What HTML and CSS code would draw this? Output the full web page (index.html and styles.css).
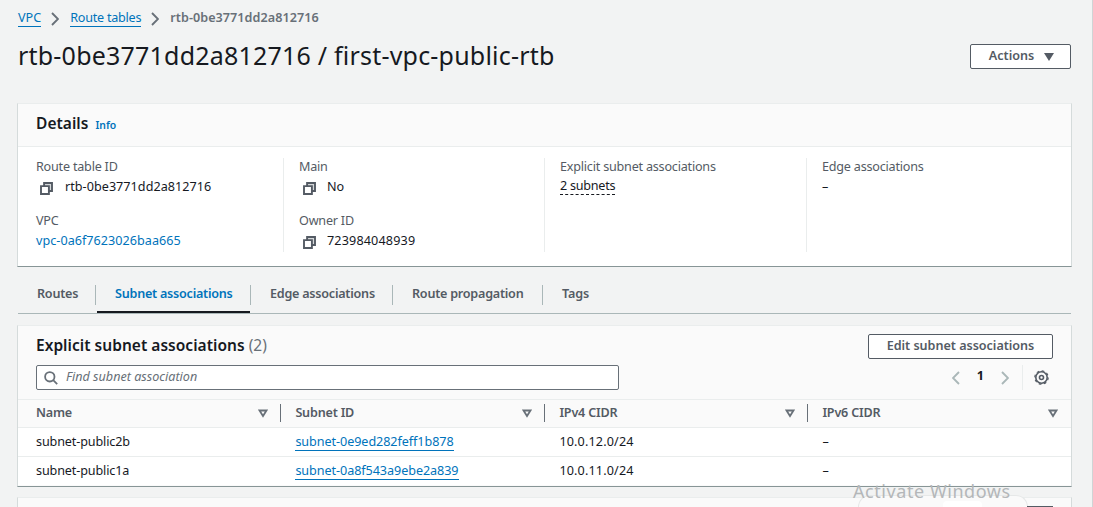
FILE: index.html
```html
<!DOCTYPE html>
<html lang="en">
<head>
<meta charset="utf-8">
<title>VPC route table</title>
<link rel="stylesheet" href="styles.css">
</head>
<body>
<svg class="defs" width="0" height="0">
  <symbol id="copy" viewBox="0 0 13 13"><path d="M4.1 1h7.9v8h-7.9z" fill="#d5d8da" stroke="currentColor" stroke-width="1.9"/><path d="M1 4.1h7.9v7.9H1z" fill="#fff" stroke="currentColor" stroke-width="1.9"/></symbol>
  <symbol id="chev" viewBox="0 0 8 14"><path d="M1 1l6 6-6 6" fill="none" stroke="currentColor" stroke-width="1.9"/></symbol>
  <symbol id="sort" viewBox="0 0 10 9"><path d="M1.5 1.5h7L5 7z" fill="none" stroke="currentColor" stroke-width="1.8"/></symbol>
</svg>
<main class="page">
  <nav class="crumbs">
    <a class="crumb">VPC</a><svg class="chev"><use href="#chev"/></svg>
    <a class="crumb tight">Route tables</a><svg class="chev"><use href="#chev"/></svg>
    <span class="current">rtb-0be3771dd2a812716</span>
  </nav>
  <header class="head">
    <h1>rtb-0be3771dd2a812716 / first-vpc-public-rtb</h1>
    <button class="btn actions"><span>Actions</span><svg width="10" height="8" viewBox="0 0 10 8"><path d="M0 0h10L5 8z" fill="currentColor"/></svg></button>
  </header>

  <section class="card details">
    <div class="details-head"><h2>Details</h2><a class="info">Info</a></div>
    <div class="grid">
      <div class="col">
        <div class="pair"><div class="label">Route table ID</div><div class="value"><svg class="copy"><use href="#copy"/></svg><span class="id">rtb-0be3771dd2a812716</span></div></div>
        <div class="pair"><div class="label">VPC</div><div class="value"><a class="id">vpc-0a6f7623026baa665</a></div></div>
      </div>
      <div class="col">
        <div class="pair"><div class="label">Main</div><div class="value"><svg class="copy"><use href="#copy"/></svg><span>No</span></div></div>
        <div class="pair"><div class="label">Owner ID</div><div class="value"><svg class="copy"><use href="#copy"/></svg><span class="digits">723984048939</span></div></div>
      </div>
      <div class="col">
        <div class="pair"><div class="label">Explicit subnet associations</div><div class="value"><span class="dashed">2 subnets</span></div></div>
      </div>
      <div class="col">
        <div class="pair"><div class="label">Edge associations</div><div class="value">–</div></div>
      </div>
    </div>
  </section>

  <div class="tabs">
    <div class="tab t1"><span>Routes</span></div>
    <div class="tab t2 active"><span>Subnet associations</span></div>
    <div class="tab t3"><span>Edge associations</span></div>
    <div class="tab t4"><span>Route propagation</span></div>
    <div class="tab t5"><span>Tags</span></div>
  </div>

  <section class="card assoc">
    <div class="assoc-head">
      <h2>Explicit subnet associations <span class="count">(2)</span></h2>
      <button class="btn edit"><span>Edit subnet associations</span></button>
    </div>
    <div class="tools">
      <div class="search"><svg width="14" height="14" viewBox="0 0 14 14"><circle cx="5.8" cy="5.8" r="4.7" fill="none" stroke="currentColor" stroke-width="1.8"/><path d="M9.2 9.2l4 4" stroke="currentColor" stroke-width="1.8"/></svg><span>Find subnet association</span></div>
      <div class="pager">
        <svg class="chev prev"><use href="#chev"/></svg><b>1</b><svg class="chev"><use href="#chev"/></svg>
        <i class="rule"></i>
        <svg class="gear" width="15" height="15" viewBox="0 0 15 15" fill="none" stroke="currentColor"><circle cx="7.5" cy="7.5" r="5.7" stroke-width="1.6"/><circle cx="7.5" cy="7.5" r="6.7" stroke-width="1.2" stroke-dasharray="2.7 2.562"/><circle cx="7.5" cy="7.5" r="2" stroke-width="1.6"/></svg>
      </div>
    </div>
    <div class="row th">
      <div class="cell"><span>Name</span><svg class="sort"><use href="#sort"/></svg></div>
      <div class="cell"><span>Subnet ID</span><svg class="sort"><use href="#sort"/></svg></div>
      <div class="cell"><span>IPv4 CIDR</span><svg class="sort"><use href="#sort"/></svg></div>
      <div class="cell"><span>IPv6 CIDR</span><svg class="sort"><use href="#sort"/></svg></div>
    </div>
    <div class="row"><div class="cell"><span class="name">subnet-public2b</span></div><div class="cell"><a>subnet-0e9ed282feff1b878</a></div><div class="cell"><span class="digits">10.0.12.0/24</span></div><div class="cell">–</div></div>
    <div class="row"><div class="cell"><span class="name">subnet-public1a</span></div><div class="cell"><a>subnet-0a8f543a9ebe2a839</a></div><div class="cell"><span class="digits">10.0.11.0/24</span></div><div class="cell">–</div></div>
  </section>
  <section class="card next"></section>
</main>
<div class="hint"><div class="hint-tab"></div></div>
<div class="dark-edge"></div>
<div class="watermark">Activate Windows</div>
</body>
</html>
```
FILE: styles.css
```css
* { box-sizing: border-box; }
body { margin: 0; width: 1093px; height: 507px; overflow: hidden; position: relative; background: #f2f3f3; font: 12.6px/18px "Noto Sans", sans-serif; color: #16191f; white-space: nowrap; }
.defs { position: absolute; }
svg { flex: none; display: block; }
a { color: #0073bb; }
h1, h2 { margin: 0; }
.page { height: 507px; padding: 0 20px 0 17px; border-right: 1px solid #d0d4d5; }
.crumbs { display: flex; align-items: center; height: 36px; padding-left: 1px; color: #687078; }
.crumb { border-bottom: 1px solid #0073bb; line-height: 16px; }
.tight { letter-spacing: -0.23px; }
.crumbs .chev { margin: 2px 11px 0 10px; }
.chev { width: 8px; height: 14px; }
.current { font-weight: 600; letter-spacing: 0.05px; }
.head { display: flex; justify-content: space-between; align-items: flex-start; height: 67px; padding: 0 1px; }
h1 { font-size: 25px; line-height: 38px; font-weight: 400; letter-spacing: 0.21px; }
.btn { display: flex; align-items: center; justify-content: center; height: 25px; background: #fff; border: 1px solid #545b64; border-radius: 2px; color: #545b64; font: 600 12.6px/18px "Noto Sans", sans-serif; padding: 0 0 1px; }
.actions { width: 101px; margin-top: 8px; padding-left: 2px; gap: 10px; }
.actions svg { margin-top: 1px; }
.card { border: 1px solid #d5dbdb; border-top-color: #eaeded; border-bottom-color: #879596; background: #fff; }
.details { height: 164px; }
.details-head { display: flex; align-items: baseline; gap: 7px; height: 43px; padding: 7px 18px 0; background: #fafafa; border-bottom: 1px solid #eaeded; }
h2 { font-size: 15.5px; line-height: 24px; font-weight: 600; letter-spacing: 0.03px; }
.info { font-size: 10.4px; font-weight: 600; }
.grid { display: grid; grid-template-columns: 247px 261px 262px 1fr; padding: 11px 18px 0; }
.col { height: 94px; padding-left: 15px; border-left: 1px solid #eaeded; display: flex; flex-direction: column; gap: 14px; }
.col:first-child { padding-left: 0; border: 0; }
.pair { margin-top: -1px; margin-bottom: 1px; }
.label { color: #545b64; line-height: 20px; letter-spacing: -0.21px; }
.value { display: flex; align-items: center; height: 20px; }
.copy { width: 13px; height: 13px; margin: 3px 12px 0 4px; color: #545b64; }
.col + .col .copy { margin-right: 11px; }
.id { letter-spacing: 0.04px; }
.digits { letter-spacing: 0.15px; }
.dashed { border-bottom: 1px dashed #16191f; line-height: 16px; letter-spacing: -0.25px; margin-top: -1px; }
.tabs { display: flex; height: 47px; margin: 0 1px 11px; border-bottom: 1px solid #aab7b8; font-weight: 600; color: #545b64; letter-spacing: -0.24px; }
.tab { position: relative; padding: 18px 0 0 19px; line-height: 18px; }
.tab + .tab::before { content: ""; position: absolute; left: -1px; top: 18px; width: 1px; height: 20px; background: #aab7b8; }
.t1 { width: 78px; }
.t2 { width: 155px; }
.t3 { width: 142px; }
.t4 { width: 150px; }
.t5 { letter-spacing: -0.1px; }
.tab.active { color: #0073bb; }
.active::after { content: ""; position: absolute; left: 1px; right: 1px; bottom: 0; height: 2px; background: #16191f; }
.assoc { height: 162px; background: #fafafa; }
.assoc-head { display: flex; justify-content: space-between; height: 39px; padding: 8px 18px 0; }
.assoc-head h2 { margin-top: -1px; }
.count { font-weight: 400; color: #687078; }
.edit { width: 185px; }
.edit, .actions { letter-spacing: -0.03px; }
.tools { display: flex; justify-content: space-between; height: 34px; padding: 0 22px 0 18px; }
.search { display: flex; align-items: center; width: 583px; height: 25px; border: 1px solid #687078; border-radius: 2px; background: #fff; padding-left: 7px; gap: 8px; color: #687078; font-style: italic; }
.search span { margin-top: -2px; }
.pager { display: flex; align-items: center; height: 25px; color: #16191f; }
.pager .chev { color: #aab7b8; }
.prev { transform: scaleX(-1); }
.pager b { margin: 0 17px; padding-bottom: 3px; }
.rule { width: 1px; height: 25px; background: #eaeded; margin: 0 11px 0 13px; }
.gear { color: #545b64; }
.row { display: grid; grid-template-columns: 260px 264px 263px 1fr; height: 29px; background: #fff; border-top: 1px solid #eaeded; align-items: center; }
.cell { padding: 0 0 1px 18px; display: flex; align-items: center; justify-content: space-between; height: 27px; position: relative; }
.cell + .cell { padding-left: 17.4px; }
.name { letter-spacing: -0.13px; }
.th { background: #fafafa; color: #545b64; font-weight: 600; height: 28px; letter-spacing: -0.2px; }
.th .cell { padding-right: 9px; }
.th .cell:last-child { padding-right: 12px; }
.th .cell + .cell::before { content: ""; position: absolute; left: 2px; top: 4px; width: 1px; height: 18px; background: #687078; }
.sort { width: 10px; height: 9px; margin: 1px 1px 0 0; color: #687078; }
.cell a { border-bottom: 1px solid #0073bb; line-height: 16px; letter-spacing: -0.06px; margin-top: 2px; }
.next { height: 10px; margin-top: 10px; background: #fafafa; border-bottom: 0; }
.hint { position: absolute; left: 858px; top: 495px; width: 170px; height: 12px; border: 1px solid #e6e8e8; border-bottom: 0; border-radius: 12px 12px 0 0; background: #fafafa; }
.hint-tab { width: 39px; height: 6px; margin: 5px 0 0 84px; background: #fff; border-radius: 4px 4px 0 0; }
.dark-edge { position: absolute; left: 1027px; top: 506px; width: 26px; height: 1px; background: #545b64; }
.watermark { position: absolute; left: 853px; top: 479px; font-size: 18px; line-height: 24px; letter-spacing: 0.56px; color: #b4b7b9; }
```
